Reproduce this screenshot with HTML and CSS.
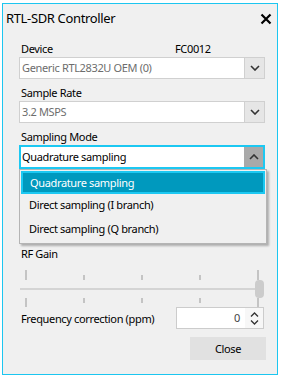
FILE: index.html
```html
<!DOCTYPE html>
<html>
<head>
<meta charset="utf-8">
<link rel="stylesheet" href="styles.css">
</head>
<body>
<div class="window">
  <div class="titlebar">
    <span class="title">RTL-SDR Controller</span>
    <svg class="close" width="12" height="12" viewBox="0 0 12 12"><path d="M1.5 1.5 L10.5 10.5 M10.5 1.5 L1.5 10.5" stroke="#000" stroke-width="2.2" fill="none"/></svg>
  </div>
  <div class="content">
    <div class="label-row"><span>Device</span><span>FC0012</span></div>
    <div class="combo">
      <span class="value muted">Generic RTL2832U OEM (0)</span>
      <span class="arrow"><svg width="10" height="6" viewBox="0 0 10 6"><path d="M1 1 L5 5 L9 1" stroke="#333" stroke-width="1.6" fill="none"/></svg></span>
    </div>
    <div class="label">Sample Rate</div>
    <div class="combo">
      <span class="value muted">3.2 MSPS</span>
      <span class="arrow"><svg width="10" height="6" viewBox="0 0 10 6"><path d="M1 1 L5 5 L9 1" stroke="#333" stroke-width="1.6" fill="none"/></svg></span>
    </div>
    <div class="label">Sampling Mode</div>
    <div class="combo-wrap">
      <div class="combo focused">
        <span class="value">Quadrature sampling</span>
        <span class="arrow pressed"><svg width="10" height="6" viewBox="0 0 10 6"><path d="M1 5 L5 1 L9 5" stroke="#333" stroke-width="1.6" fill="none"/></svg></span>
      </div>
      <ul class="dropdown">
        <li class="selected">Quadrature sampling</li>
        <li>Direct sampling (I branch)</li>
        <li>Direct sampling (Q branch)</li>
      </ul>
    </div>
    <div class="spacer"></div>
    <div class="label">RF Gain</div>
    <div class="slider">
      <div class="ticks top"><i class="long"></i><i></i><i></i><i></i><i class="long"></i></div>
      <div class="track"><span class="thumb"></span></div>
      <div class="ticks bottom"><i class="long"></i><i></i><i></i><i></i><i class="long"></i></div>
    </div>
    <div class="freq-row">
      <span>Frequency correction (ppm)</span>
      <div class="spin">
        <span class="num">0</span>
        <span class="spin-btns">
          <svg width="9" height="5" viewBox="0 0 9 5"><path d="M1 4.5 L4.5 1 L8 4.5" stroke="#333" stroke-width="1.3" fill="none"/></svg>
          <svg width="9" height="5" viewBox="0 0 9 5"><path d="M1 0.5 L4.5 4 L8 0.5" stroke="#333" stroke-width="1.3" fill="none"/></svg>
        </span>
      </div>
    </div>
    <div class="actions"><button class="btn">Close</button></div>
  </div>
</div>
</body>
</html>
```

FILE: styles.css
```css
* { box-sizing: border-box; }
html, body { margin: 0; padding: 0; }
body {
  width: 281px;
  height: 376px;
  background: #ffffff;
  font-family: "Noto Sans", Lato, sans-serif;
  font-size: 11px;
  letter-spacing: -0.35px;
  color: #000;
  overflow: hidden;
}
.window {
  margin: 3px 3px 0 2px;
  width: 276px;
  height: 372px;
  border: 1px solid #1cc6f0;
  background: #f0f0f0;
  display: flex;
  flex-direction: column;
}
.titlebar {
  height: 37px;
  display: flex;
  align-items: flex-start;
  justify-content: space-between;
  padding: 4px 0 0 3px;
}
.title {
  font-size: 13px;
  line-height: 20px;
  color: #000;
}
.close { margin: 5px 5px 0 0; }
.content {
  padding: 0 12px 0 16px;
  display: flex;
  flex-direction: column;
}
.label-row {
  display: grid;
  grid-template-columns: 154px 1fr;
  height: 16px;
  line-height: 16px;
  padding-left: 2px;
}
.label {
  height: 16px;
  line-height: 16px;
  padding-left: 2px;
  margin-top: 6px;
}
.combo {
  height: 22px;
  background: #fff;
  border: 1px solid #d0d0d0;
  display: flex;
  align-items: stretch;
}
.combo .value {
  flex: 1;
  line-height: 20px;
  padding-left: 2px;
}
.muted { color: #6d6d6d; }
.arrow {
  width: 20px;
  background: #e6e6e6;
  border-left: 1px solid #d0d0d0;
  display: flex;
  align-items: center;
  justify-content: center;
}
.combo.focused {
  border: 2px solid #1cc8f2;
  height: 24px;
}
.combo.focused .value { padding-left: 1px; }
.arrow.pressed {
  background: #a9a9a9;
  border-left: none;
  width: 19px;
}
.combo-wrap { position: relative; }
.dropdown {
  position: absolute;
  left: 0;
  top: 24px;
  width: 248px;
  margin: 0;
  padding: 1px;
  list-style: none;
  background: #f0f0f0;
  border: 1px solid #b4b4b4;
  box-shadow: 2px 2px 2px rgba(0, 0, 0, 0.28);
  z-index: 2;
}
.dropdown li {
  height: 24px;
  line-height: 22px;
  padding-left: 8px;
  color: #000;
}
.dropdown li.selected {
  height: 23px;
  background: #0099be;
  border: 2px solid #1cc8f2;
  color: #fff;
  line-height: 19px;
  padding-left: 7px;
}
.spacer { height: 71px; }
.slider {
  display: flex;
  flex-direction: column;
  height: 45px;
  padding-top: 8px;
}
.ticks {
  display: flex;
  justify-content: space-between;
  margin-left: 6px;
  width: 234px;
}
.ticks i {
  display: block;
  width: 2px;
  background: #c4c4c4;
}
.ticks.top { height: 10px; align-items: flex-end; }
.ticks.top i { height: 5px; }
.ticks.top i.long { height: 10px; }
.ticks.bottom { height: 9px; align-items: flex-start; margin-top: 8px; }
.ticks.bottom i { height: 5px; }
.ticks.bottom i.long { height: 9px; }
.track {
  position: relative;
  margin: 8px 0 0 1px;
  width: 242px;
  height: 2px;
  background: #d4d4d4;
}
.thumb {
  position: absolute;
  left: 235px;
  top: -8px;
  width: 9px;
  height: 18px;
  border-radius: 4px;
  background: #cccccc;
}
.freq-row {
  height: 22px;
  display: flex;
  align-items: center;
  justify-content: space-between;
  padding-left: 2px;
}
.spin {
  width: 88px;
  height: 22px;
  background: #fff;
  border: 1px solid #cccccc;
  display: flex;
  margin-right: 1px;
}
.num {
  flex: 1;
  text-align: right;
  line-height: 20px;
  padding-right: 5px;
  color: #444;
}
.spin-btns {
  width: 18px;
  background: #f7f7f7;
  display: flex;
  flex-direction: column;
  align-items: center;
  justify-content: space-around;
  padding: 2px 0;
}
.spin-btns svg { display: block; }
.actions {
  display: flex;
  justify-content: flex-end;
  margin-top: 8px;
}
.btn {
  width: 76px;
  height: 23px;
  margin-right: -1px;
  background: #e1e1e1;
  border: none;
  font-family: inherit;
  font-size: 11px;
  letter-spacing: -0.35px;
  color: #000;
  padding: 0;
}
```
